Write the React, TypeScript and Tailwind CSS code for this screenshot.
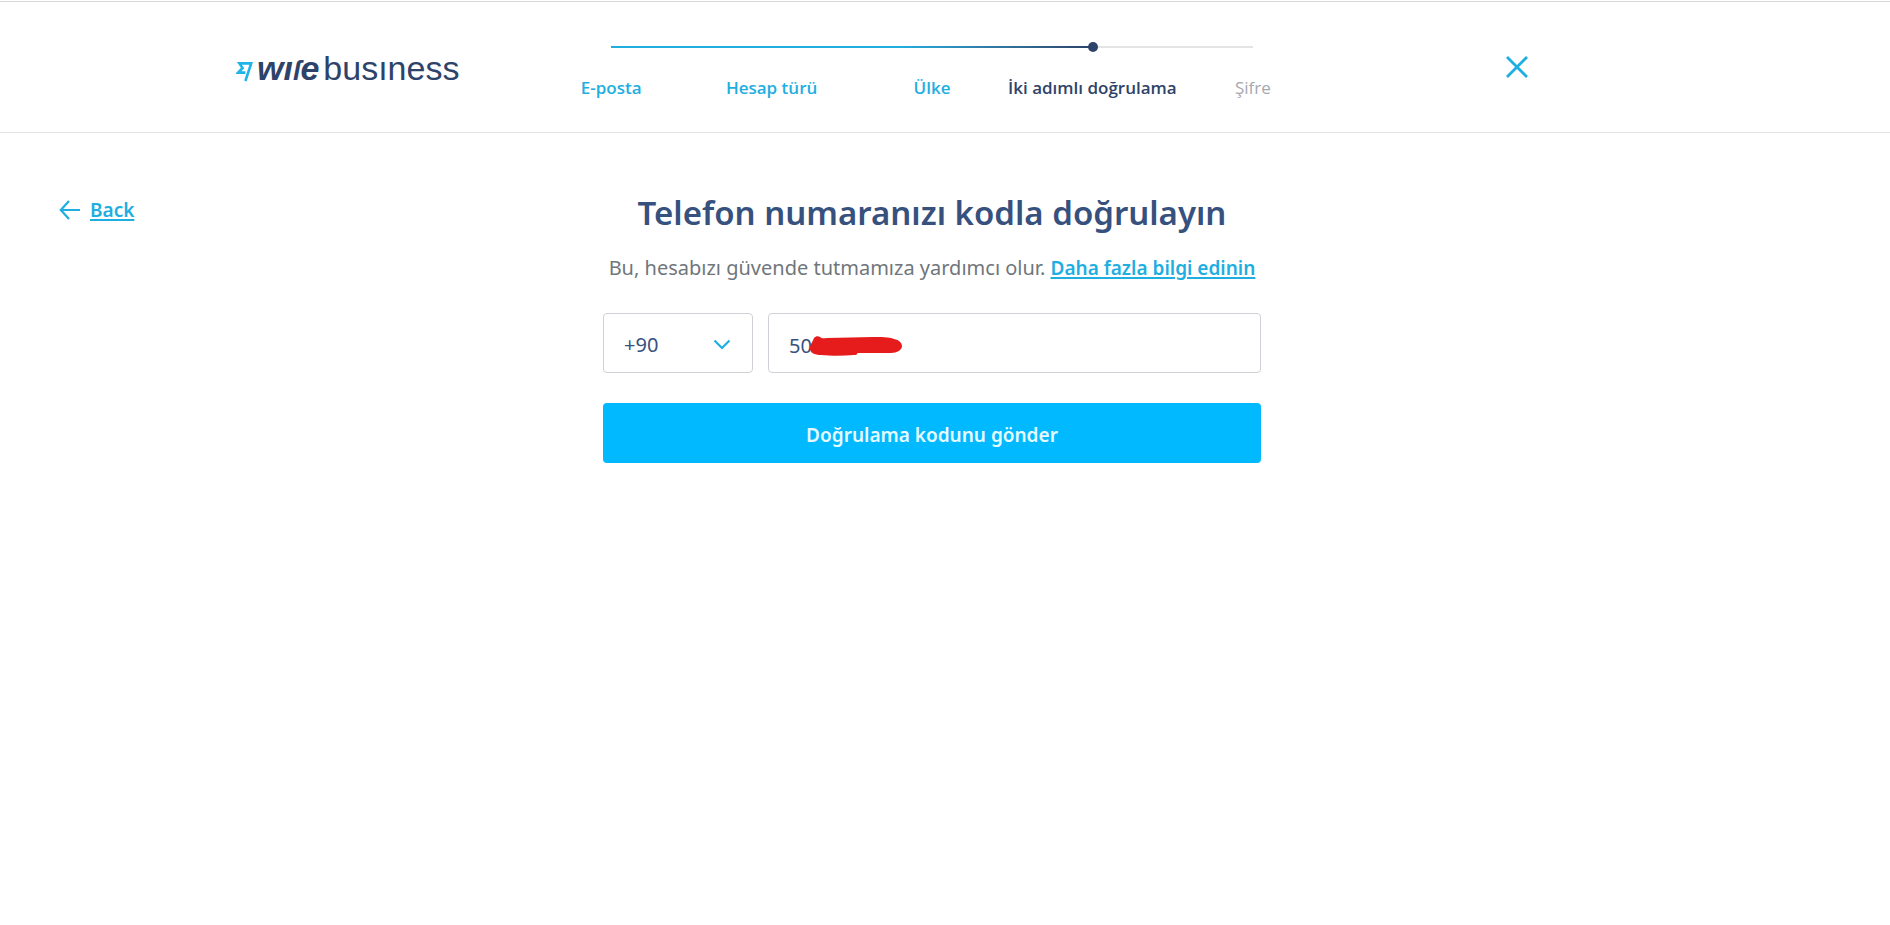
import React, { useState } from "react";
import clsx from "clsx";

type StepState = "done" | "active" | "upcoming";

interface Step {
  label: string;
  state: StepState;
}

const STEPS: Step[] = [
  { label: "E-posta", state: "done" },
  { label: "Hesap türü", state: "done" },
  { label: "Ülke", state: "done" },
  { label: "İki adımlı doğrulama", state: "active" },
  { label: "Şifre", state: "upcoming" },
];

const DIAL_CODES = ["+90", "+44", "+49", "+1"];

const Logo: React.FC = () => (
  <a
    href="#"
    aria-label="Wise Business"
    className="flex items-center whitespace-nowrap font-['Liberation_Sans',sans-serif] text-[34px] leading-10 text-[#2e4369]"
  >
    <svg width="17" height="20" viewBox="0 0 17 20" fill="none" className="mt-2 mr-1" aria-hidden="true">
      <path
        d="M9.4 10.6H2.2L6.6 6L3.4 1.4H15.2L9.4 19"
        stroke="#1eb4ea"
        strokeWidth="2.6"
      />
    </svg>
    <span className="flex items-baseline gap-1">
      <span className="font-bold italic">
        wı<span className="text-[27px] leading-none">ſ</span>e
      </span>
      <span>busıness</span>
    </span>
  </a>
);

const Stepper: React.FC<{ steps: Step[] }> = ({ steps }) => {
  const current = steps.findIndex((step) => step.state === "active");
  const progress = (current / (steps.length - 1)) * 100;

  return (
    <nav aria-label="Progress">
      {/* Track */}
      <div className="mx-20 flex h-[10px] items-center">
        <div
          className="h-[2px] bg-linear-to-r from-[#20aede] from-60% to-[#2c4468]"
          style={{ width: `${progress}%` }}
        />
        <div className="z-10 -mx-[5px] size-[10px] rounded-full bg-[#2e4369]" />
        <div className="h-[2px] flex-1 bg-[#e2e4e6]" />
      </div>

      <ol className="mt-6 grid grid-cols-5 font-['Open_Sans',sans-serif] text-[17px] leading-6">
        {steps.map((step) => (
          <li key={step.label} className="flex justify-center whitespace-nowrap">
            {step.state === "done" ? (
              <a href="#" className="font-semibold text-[#1eaee0]">
                {step.label}
              </a>
            ) : (
              <span
                aria-current={step.state === "active" ? "step" : undefined}
                className={clsx(
                  step.state === "active" ? "font-semibold text-[#2e4369]" : "text-[#a6a9ad]"
                )}
              >
                {step.label}
              </span>
            )}
          </li>
        ))}
      </ol>
    </nav>
  );
};

const PhoneForm: React.FC = () => {
  const [dialCode, setDialCode] = useState("+90");
  const [phone, setPhone] = useState("50");

  return (
    <form className="mt-[31px]" onSubmit={(e) => e.preventDefault()}>
      <div className="flex gap-[15px]">
        <div className="relative w-[150px]">
          <select
            aria-label="Ülke kodu"
            value={dialCode}
            onChange={(e) => setDialCode(e.target.value)}
            className="h-[60px] w-full appearance-none rounded border border-[#cfd2d6] bg-white px-5 pt-1 text-xl text-[#37517e]"
          >
            {DIAL_CODES.map((code) => (
              <option key={code}>{code}</option>
            ))}
          </select>
          <svg
            width="18"
            height="12"
            viewBox="0 0 18 12"
            fill="none"
            className="pointer-events-none absolute top-[26px] right-[22px]"
            aria-hidden="true"
          >
            <path d="M1.5 1.5L9 9L16.5 1.5" stroke="#1eb0e2" strokeWidth="2.2" />
          </svg>
        </div>

        <div className="relative flex-1">
          <input
            aria-label="Telefon numarası"
            type="tel"
            value={phone}
            onChange={(e) => setPhone(e.target.value)}
            className="h-[60px] w-full rounded border border-[#cfd2d6] bg-white px-5 pt-1 text-xl text-[#37517e]"
          />
          {/* Redaction mark over the rest of the number */}
          <svg
            width="94"
            height="22"
            viewBox="0 0 94 22"
            className="pointer-events-none absolute top-[23px] left-[41px]"
            aria-hidden="true"
          >
            <path
              d="M1 11C2 7 4 5 5 2C7 0 9 0 11 1C13 3 15 2 18 2L64 1C72 1 80 1 85 3C90 4 93 7 93 10C93 14 88 17 82 17H49C47 18 49 19 45 19C34 20 22 20 12 19C6 19 0 17 1 11Z"
              fill="#e61c1c"
            />
          </svg>
        </div>
      </div>

      <button
        type="submit"
        className="mt-[30px] h-[60px] w-full rounded bg-[#00b9ff] pt-1 text-[19px] font-semibold text-[#e6fbff]"
      >
        Doğrulama kodunu gönder
      </button>
    </form>
  );
};

const App: React.FC = () => {
  return (
    <div className="min-h-screen bg-white pt-px font-['Noto_Sans','Open_Sans',sans-serif]">
      <header className="border-y border-t-[#d6d8da] border-b-[#e2e4e6] pr-[26px]">
        <div className="grid h-[130px] grid-cols-[1fr_minmax(0,802px)_1fr]">
          <div className="flex items-center pt-px pl-[236px]">
            <Logo />
          </div>
          <div className="pt-10">
            <Stepper steps={STEPS} />
          </div>
          <div className="flex items-center justify-end pr-[335px]">
            <button type="button" aria-label="Kapat">
              <svg width="24" height="24" viewBox="0 0 24 24" fill="none" aria-hidden="true">
                <path d="M2 2L22 22M22 2L2 22" stroke="#1eaee0" strokeWidth="2.8" />
              </svg>
            </button>
          </div>
        </div>
      </header>

      <div className="grid grid-cols-[1fr_minmax(0,658px)_1fr] pr-[26px]">
        <div className="pt-[63px] pl-[59px]">
          <a href="#" className="inline-flex items-center gap-[10px] text-[#1eaee0]">
            <svg width="21" height="20" viewBox="0 0 21 20" fill="none" aria-hidden="true">
              <path d="M10 1L1.8 10L10 19M1.8 10H21" stroke="currentColor" strokeWidth="2.2" />
            </svg>
            <span className="text-[19px] leading-7 font-semibold underline decoration-2 underline-offset-2">
              Back
            </span>
          </a>
        </div>

        <main className="pt-14 text-center">
          <h1 className="text-[33px] leading-[48px] font-semibold whitespace-nowrap text-[#37517e]">
            Telefon numaranızı kodla doğrulayın
          </h1>
          <p className="mt-[17px] text-xl leading-7 whitespace-nowrap text-[#6f767c]">
            Bu, hesabızı güvende tutmamıza yardımcı olur.{" "}
            <a
              href="#"
              className="text-[19px] font-semibold text-[#1eaee0] underline decoration-2 underline-offset-2"
            >
              Daha fazla bilgi edinin
            </a>
          </p>
          <PhoneForm />
        </main>
      </div>
    </div>
  );
};

export default App;
